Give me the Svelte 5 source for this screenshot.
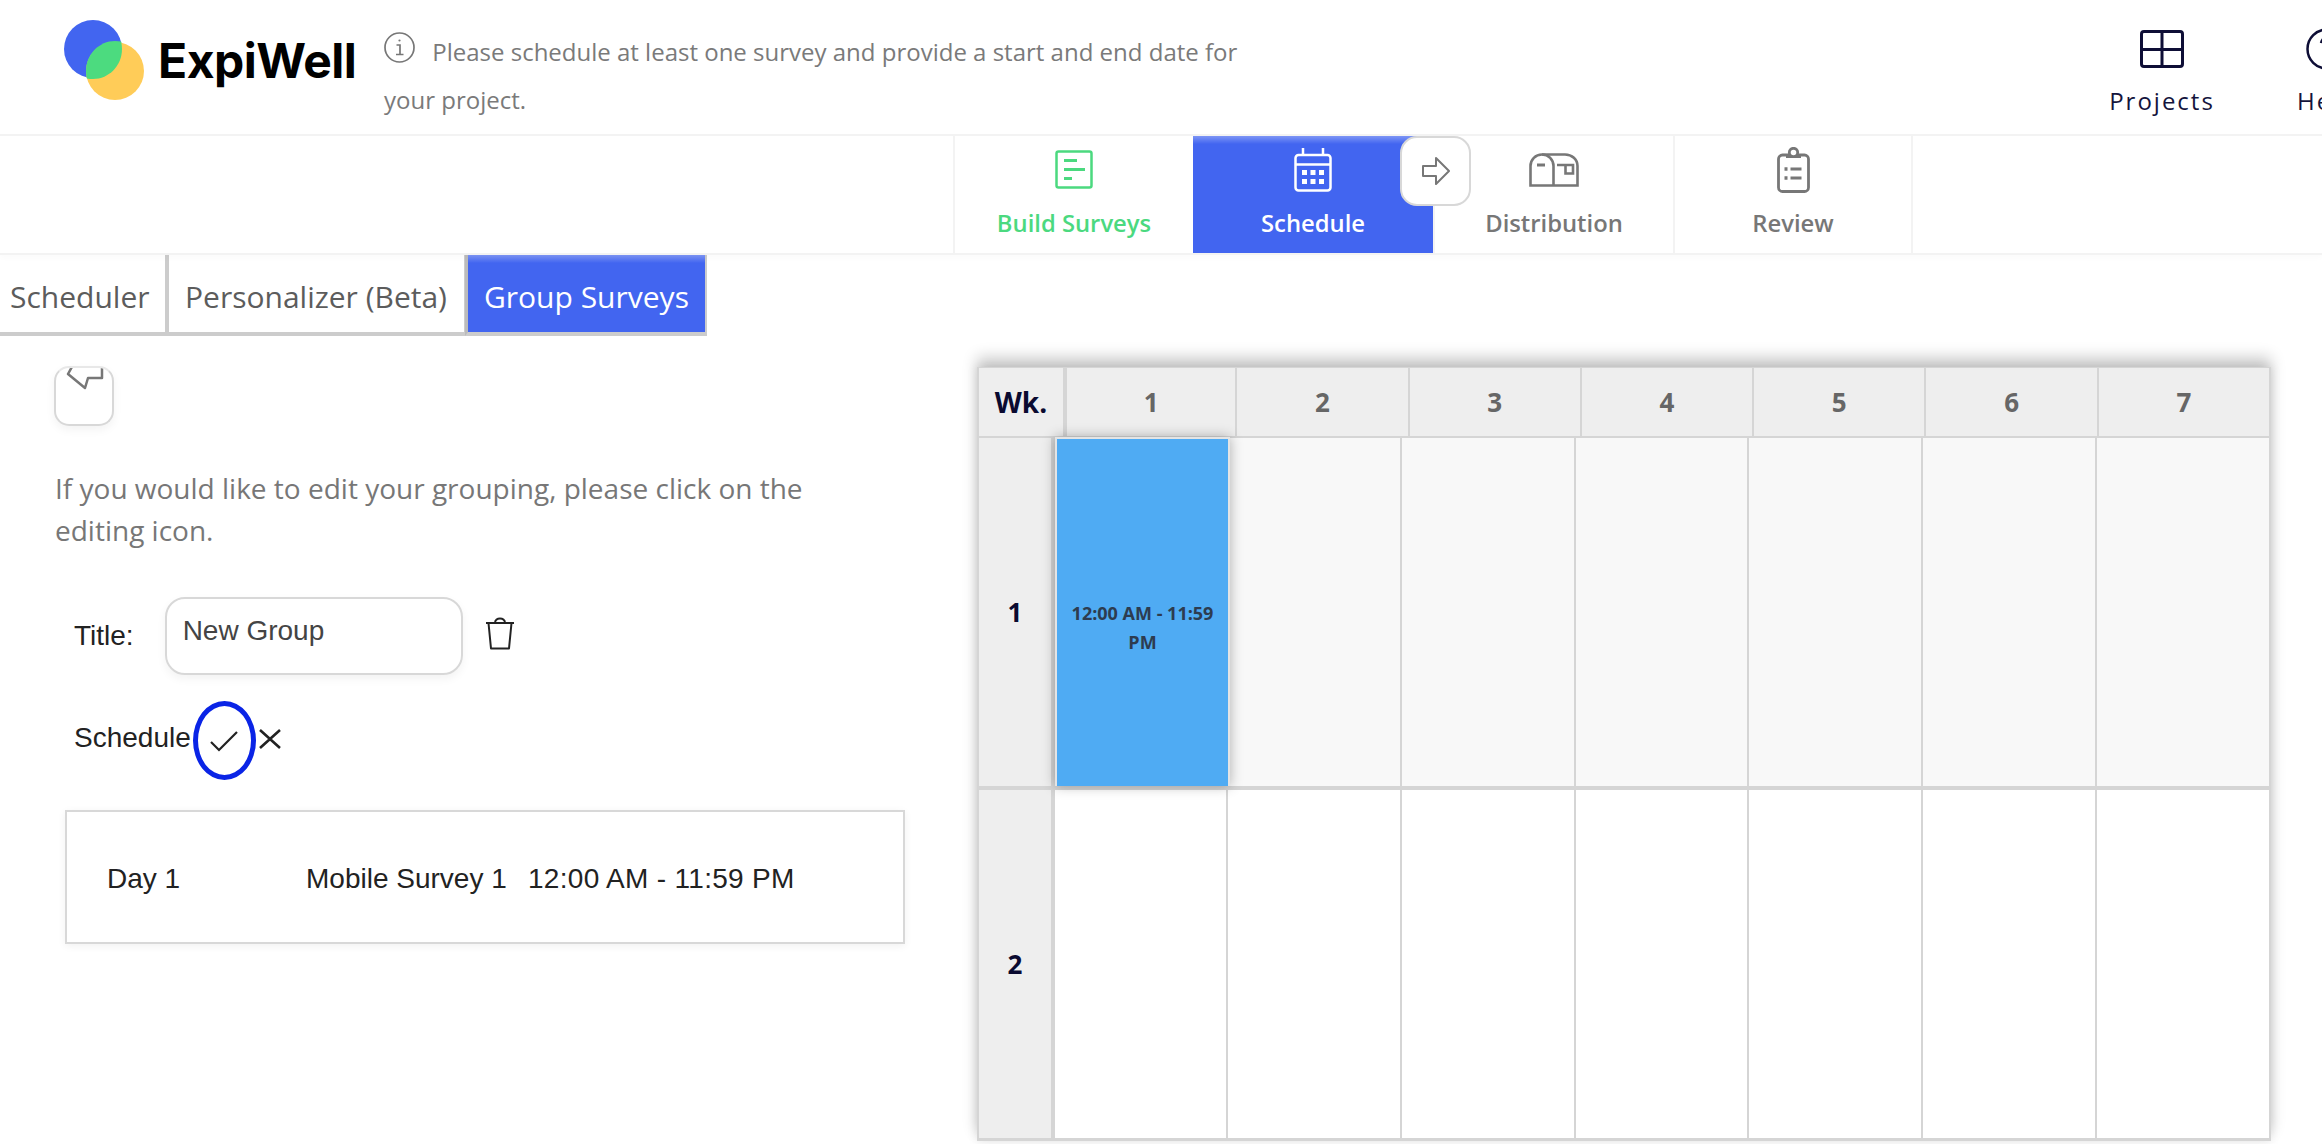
<script>
  const steps = [
    { key: 'build', label: 'Build Surveys' },
    { key: 'schedule', label: 'Schedule', active: true },
    { key: 'distribution', label: 'Distribution' },
    { key: 'review', label: 'Review' }
  ];
  const days = [1, 2, 3, 4, 5, 6, 7];
  const tabs = [
    { label: 'Scheduler' },
    { label: 'Personalizer (Beta)' },
    { label: 'Group Surveys', active: true }
  ];
</script>

<div class="page">
  <header class="top">
    <div class="logo">
      <svg width="80" height="80" viewBox="0 0 80 80">
        <ellipse cx="29" cy="29" rx="29" ry="29" fill="#4265f0" />
        <ellipse cx="51" cy="51" rx="29" ry="29" fill="#ffcc58" />
        <path d="M58 29c0-2.500-.3-5-.9-7.400C55.100 21.200 53.100 21 51 21c-16 0-29 13.500-29 30 0 2.500.3 5 .9 7.400 2 .4 4 .6 6.100.6 16 0 29-13.500 29-30z" fill="#4cdb7f" />
      </svg>
      <span class="brand">ExpiWell</span>
    </div>
    <p class="message">
      <svg class="info" width="31" height="31" viewBox="0 0 31 31" fill="none" stroke="#777" stroke-width="1.700">
        <circle cx="15.500" cy="15.500" r="14.500" />
        <path d="M12.500 13h3.500v9M12 22.500h7.500" />
        <circle cx="15.500" cy="8.500" r="1.100" fill="#777" stroke="none" />
      </svg>
      Please schedule at least one survey and provide a start and end date for your project.
    </p>
    <nav class="links">
      <div class="link">
        <svg width="44" height="38" viewBox="0 0 44 38" fill="none" stroke="#0e0e36" stroke-width="3">
          <rect x="1.500" y="1.500" width="41" height="35" rx="2.500" />
          <path d="M22 1.500v35M1.500 19.500h41" />
        </svg>
        <span>Projects</span>
      </div>
      <div class="link help">
        <svg width="42" height="42" viewBox="0 0 42 42" fill="none" stroke="#0e0e36" stroke-width="2.500">
          <circle cx="21" cy="21" r="19.500" />
          <path d="M15 15c1-4 4-5.500 6.500-5.500 3.500 0 6 2.300 6 5.500 0 4.500-6.500 5-6.500 10" />
        </svg>
        <span>Help</span>
      </div>
    </nav>
  </header>

  <div class="steps">
    {#each steps as step}
      <div class="step {step.key}" class:active={step.active}>
        <div class="step-icon">
          {#if step.key === 'build'}
            <svg width="38" height="39" viewBox="0 0 38 39" fill="none" stroke="#4bd97f" stroke-width="2.500">
              <rect x="1.500" y="1.500" width="35" height="36" rx="2" />
              <path d="M9 10.500h13M9 19.500h21M9 28.500h8" stroke-width="3" />
            </svg>
          {:else if step.key === 'schedule'}
            <svg width="38" height="45" viewBox="0 0 38 45" fill="none" stroke="#fff" stroke-width="2.500">
              <rect x="1.500" y="8" width="35" height="35.500" rx="3" />
              <path d="M1.500 17.500h35M9 1v7M29 1v7" />
              <g fill="#fff" stroke="none">
                <rect x="8" y="23" width="5" height="5" /><rect x="16.500" y="23" width="5" height="5" /><rect x="25" y="23" width="5" height="5" />
                <rect x="8" y="32" width="5" height="5" /><rect x="16.500" y="32" width="5" height="5" /><rect x="25" y="32" width="5" height="5" />
              </g>
            </svg>
          {:else if step.key === 'distribution'}
            <svg width="50" height="34" viewBox="0 0 50 34" fill="none" stroke="#777" stroke-width="2.600">
              <path d="M13 1.500h23c7 0 12.500 5 12.500 11.500v19.500H1.500V13C1.500 6.500 6.500 1.500 13 1.500z" />
              <path d="M13 1.500c6.500 0 11.500 5 11.500 11.500v19.500" />
              <path d="M8 12h8" stroke-width="3" />
              <path d="M28 12h16v8.500h-7.500V12" />
            </svg>
          {:else}
            <svg width="33" height="46" viewBox="0 0 33 46" fill="none" stroke="#777" stroke-width="2.800">
              <rect x="1.500" y="8" width="30" height="36.500" rx="4" />
              <path d="M9 9h15" stroke-width="4" />
              <circle cx="16.500" cy="5.500" r="4.200" fill="#fff" />
              <path d="M13.500 22h11M13.500 31h11" stroke-width="3" />
              <path d="M7.500 22h3M7.500 31h3" stroke-width="3.500" />
            </svg>
          {/if}
        </div>
        <span>{step.label}</span>
      </div>
    {/each}
    <button class="next" aria-label="Next">
      <svg width="28" height="28" viewBox="0 0 28 28" fill="none" stroke="#777" stroke-width="2" stroke-linejoin="round">
        <path d="M1 9h13V1l13 13-13 13v-8H1z" />
      </svg>
    </button>
  </div>

  <div class="tabs">
    {#each tabs as tab}
      <div class="tab" class:active={tab.active}>{tab.label}</div>
    {/each}
  </div>

  <main class="main">
    <section class="left">
      <button class="edit" aria-label="Edit">
        <svg width="58" height="59" viewBox="0 0 58 59" fill="none" stroke="#777" stroke-width="2.500" stroke-linejoin="round">
          <path d="M18-2l-5 9 17 14 3-10h14V-2" />
        </svg>
      </button>
      <p class="hint">If you would like to edit your grouping, please click on the editing icon.</p>
      <div class="title-row">
        <span class="field-label">Title:</span>
        <div class="title-input">New Group</div>
        <svg class="trash" width="30" height="33" viewBox="0 0 30 33" fill="none" stroke="#222" stroke-width="2" stroke-linejoin="round">
          <path d="M1 6h28M3.500 6l2.500 25.500h18L26.500 6M10 6c0-6 10-6 10 0" />
        </svg>
      </div>
      <div class="schedule-row">
        <span class="field-label raised">Schedule</span>
        <div class="check">
          <svg width="28" height="21" viewBox="0 0 28 21" fill="none" stroke="#222" stroke-width="2.200">
            <path d="M1 11l8 8L27 1" />
          </svg>
        </div>
        <svg class="cross" width="22" height="20" viewBox="0 0 22 20" fill="none" stroke="#222" stroke-width="2.600">
          <path d="M1 1l20 18M21 1L1 19" />
        </svg>
      </div>
      <div class="day-card">
        <span class="day">Day 1</span>
        <span class="survey">Mobile Survey 1</span>
        <span class="time">12:00 AM - 11:59 PM</span>
      </div>
    </section>

    <section class="calendar">
      <div class="cal-head">
        <div class="wk">Wk.</div>
        {#each days as d}
          <div class="head-cell">{d}</div>
        {/each}
      </div>
      <div class="cal-row first">
        <div class="row-no">1</div>
        {#each days as d}
          {#if d === 1}
            <div class="cell event"><span>12:00 AM - 11:59</span> <span>PM</span></div>
          {:else}
            <div class="cell"></div>
          {/if}
        {/each}
      </div>
      <div class="cal-row">
        <div class="row-no">2</div>
        {#each days as d}
          <div class="cell"></div>
        {/each}
      </div>
    </section>
  </main>
</div>

<style>
  :global(body) {
    margin: 0;
    background: #fff;
    overflow: hidden;
  }

  .page {
    width: 2322px;
    height: 1144px;
    overflow: hidden;
    font-family: "Open Sans", sans-serif;
    color: #777;
  }

  .top {
    display: flex;
    height: 136px;
    box-sizing: border-box;
    border-bottom: 2px solid #f3f3f3;
  }

  .logo {
    display: flex;
    align-items: center;
    width: 320px;
    height: 120px;
    padding-left: 64px;
    flex: none;
  }

  .brand {
    margin-left: 14px;
    font: 700 48px Inter, sans-serif;
    letter-spacing: -0.5px;
    color: #000;
  }

  .message {
    width: 870px;
    flex: none;
    margin: 0;
    padding-top: 28px;
    font-size: 24px;
    line-height: 48px;
    color: #7a7a7a;
  }

  .info {
    vertical-align: -2px;
    margin-right: 11px;
  }

  .links {
    display: flex;
    margin-left: 856px;
    flex: none;
  }

  .link {
    display: flex;
    flex-direction: column;
    align-items: center;
    width: 104px;
    padding-top: 30px;
    gap: 16px;
    font-size: 24px;
    letter-spacing: 2px;
    color: #14143c;
  }

  .link span {
    line-height: 34px;
  }

  .link.help {
    margin-left: 83px;
    padding-top: 28px;
    width: 60px;
    gap: 14px;
  }

  .steps {
    position: relative;
    display: flex;
    height: 119px;
    padding-left: 953px;
    box-sizing: border-box;
    border-bottom: 2px solid #f3f3f3;
    box-shadow: 0 3px 6px rgba(0, 0, 0, 0.02);
  }

  .step {
    width: 240px;
    box-sizing: border-box;
    border-left: 2px solid #f3f3f3;
    display: flex;
    flex-direction: column;
    align-items: center;
    font-size: 23.800px;
    font-weight: 600;
    color: #777;
  }

  .step:last-of-type {
    border-right: 2px solid #f3f3f3;
  }

  .step-icon {
    box-sizing: border-box;
    height: 72px;
    padding-top: 11px;
    display: flex;
    align-items: flex-start;
    justify-content: center;
  }

  .step span {
    line-height: 30px;
  }

  .step.build {
    color: #4bd97f;
  }

  .step.build .step-icon {
    padding-top: 14px;
  }

  .step.distribution .step-icon {
    padding-top: 17px;
  }

  .step.active {
    background: linear-gradient(#7d95f5, #4265f0 8px);
    color: #fff;
    border-left: 0;
  }

  .next {
    position: absolute;
    left: 1400px;
    top: 0;
    width: 71px;
    height: 70px;
    padding: 0;
    background: #fff;
    border: 2px solid #d8d8d8;
    border-radius: 17px;
    display: flex;
    align-items: center;
    justify-content: center;
  }

  .tabs {
    display: flex;
    height: 81px;
  }

  .tab {
    box-sizing: border-box;
    height: 81px;
    padding: 0 0 0 17px;
    border-bottom: 4px solid #ccc;
    border-right: 4px solid #ccc;
    font-size: 30px;
    line-height: 83px;
    color: #5c5c5c;
    white-space: nowrap;
  }

  .tab:first-child {
    width: 169px;
    padding-left: 10px;
  }

  .tab:nth-child(2) {
    width: 299px;
    padding-left: 16px;
  }

  .tab.active {
    width: 242px;
    padding-left: 16px;
    border-left: 3px solid #bbb;
    border-right-width: 2px;
    margin-left: -3px;
    color: #fff;
    background: linear-gradient(#7d95f5, #4265f0 8px);
  }

  .main {
    display: flex;
  }

  .left {
    width: 977px;
    flex: none;
    box-sizing: border-box;
    padding: 30px 0 0 55px;
  }

  .edit {
    display: block;
    width: 60px;
    height: 60px;
    margin-left: -1px;
    padding: 0;
    background: #fff;
    border: 2px solid #d8d8d8;
    border-top-color: #e8e8e8;
    border-radius: 15px;
    box-shadow: 0 4px 10px rgba(0, 0, 0, 0.05);
    overflow: hidden;
  }

  .edit svg {
    display: block;
    margin: -1px;
  }

  .hint {
    width: 800px;
    margin: 41px 0 0;
    font-size: 28px;
    line-height: 42px;
    color: #777;
  }

  .title-row {
    display: flex;
    align-items: center;
    margin: 46px 0 0 19px;
    height: 78px;
  }

  .field-label {
    font: 28px "Liberation Sans", Arial, sans-serif;
    color: #222;
  }

  .field-label.raised {
    margin-bottom: 5px;
  }

  .title-input {
    box-sizing: border-box;
    width: 298px;
    height: 78px;
    margin-left: 31px;
    padding: 16px 0 0 16px;
    border: 2px solid #d8d8d8;
    border-radius: 20px;
    box-shadow: 0 4px 10px rgba(0, 0, 0, 0.05);
    font: 28px "Liberation Sans", Arial, sans-serif;
    color: #444;
  }

  .trash {
    margin-left: 22px;
    margin-top: -5px;
  }

  .schedule-row {
    display: flex;
    align-items: center;
    height: 79px;
    margin: 26px 0 0 19px;
  }

  .check {
    box-sizing: border-box;
    width: 63px;
    height: 79px;
    margin-left: 2px;
    border: 5px solid #0a24e6;
    border-radius: 50%;
    display: flex;
    align-items: center;
    justify-content: center;
  }

  .check svg {
    margin-top: 2px;
  }

  .cross {
    margin: 0 0 3px 3px;
  }

  .day-card {
    box-sizing: border-box;
    display: flex;
    align-items: center;
    width: 840px;
    height: 134px;
    margin: 30px 0 0 10px;
    padding: 3px 0 0 40px;
    border: 2px solid #d8d8d8;
    box-shadow: 0 2px 8px rgba(0, 0, 0, 0.06);
    font: 28px "Liberation Sans", Arial, sans-serif;
    color: #222;
  }

  .day {
    width: 199px;
  }

  .survey {
    width: 222px;
  }

  .time {
    letter-spacing: 0.3px;
  }

  .calendar {
    width: 1294px;
    flex: none;
    box-sizing: border-box;
    margin-top: 31px;
    height: 774px;
    border: 2px solid #d5d5d5;
    border-top-width: 1px;
    box-shadow: 0 -10px 14px rgba(0, 0, 0, 0.2), 0 0 10px rgba(0, 0, 0, 0.1);
    background: #fff;
  }

  .cal-head {
    display: grid;
    grid-template-columns: 84px repeat(7, 1fr);
    height: 70px;
    border-bottom: 2px solid #d5d5d5;
    box-sizing: border-box;
    background: #eee;
    font-weight: 700;
    font-size: 26px;
  }

  .wk {
    display: flex;
    align-items: center;
    justify-content: center;
    font-size: 28px;
    color: #0a0a30;
  }

  .head-cell {
    display: flex;
    align-items: center;
    justify-content: center;
    border-left: 2px solid #d5d5d5;
    color: #666;
  }

  .head-cell:nth-child(2) {
    border-left-width: 4px;
  }

  .cal-row {
    display: grid;
    grid-template-columns: 72px 175px repeat(6, 1fr);
    height: 350px;
    box-sizing: border-box;
    border-bottom: 2px solid #d5d5d5;
  }

  .cal-row.first {
    height: 352px;
    border-bottom-width: 4px;
  }

  .cal-row.first .cell {
    background: #f8f8f8;
  }

  .row-no {
    display: flex;
    align-items: center;
    justify-content: center;
    background: #eee;
    font-size: 26px;
    font-weight: 700;
    color: #0a0a30;
    border-right: 4px solid #d5d5d5;
    margin-right: -4px;
  }

  .cell {
    border-left: 2px solid #d5d5d5;
  }

  .row-no + .cell {
    border-left: 0;
    margin-left: 4px;
  }

  .cal-row.first .cell.event {
    position: relative;
    margin: -1px -4px 0 4px;
    padding: 30px 0 0;
    display: flex;
    flex-direction: column;
    align-items: center;
    justify-content: center;
    background: #4fabf3;
    border: 2px solid #e4e4e4;
    border-bottom: 0;
    box-shadow: 0 0 12px rgba(0, 0, 0, 0.3);
    font-size: 18px;
    font-weight: 700;
    line-height: 29px;
    color: #2d3c50;
  }
</style>
